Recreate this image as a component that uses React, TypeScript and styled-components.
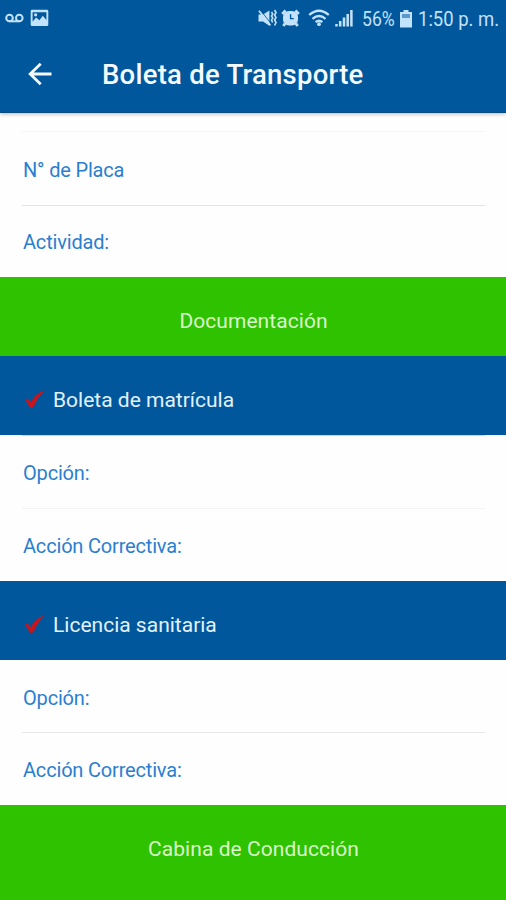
import React from "react";
import styled, { createGlobalStyle } from "styled-components";

const GlobalStyle = createGlobalStyle`
  html, body { margin: 0; padding: 0; background: #fefefe; }
  body { font-family: Roboto, "Liberation Sans", sans-serif; }
`;

const Screen = styled.div`
  width: 506px;
  height: 900px;
  overflow: hidden;
  background: #fefefe;
  display: flex;
  flex-direction: column;
`;

const Header = styled.header`
  flex: none;
  height: 113px;
  box-sizing: border-box;
  background: #01579b;
  border-bottom: 1px solid #0a4a88;
  box-shadow: 0 1px 4px rgba(0, 0, 0, 0.28);
`;

const StatusBar = styled.div`
  height: 37px;
  display: flex;
  align-items: center;
  color: #c3e2fb;
  padding-left: 5px;
`;

const StatusIcon = styled.svg<{ $gap?: number }>`
  flex: none;
  display: block;
  margin-left: ${(p) => p.$gap ?? 0}px;
`;

const Spacer = styled.div`
  flex: 1;
`;

const StatusText = styled.div<{ $width: number; $scale: number; $gap: number }>`
  flex: none;
  width: ${(p) => p.$width}px;
  margin-left: ${(p) => p.$gap}px;
  font-size: 21px;
  line-height: 38px;
  white-space: nowrap;
  transform: scaleX(${(p) => p.$scale});
  transform-origin: left center;
`;

const AppBar = styled.div`
  height: 75px;
  display: flex;
  align-items: center;
  color: #f4faff;
`;

const BackIcon = styled.svg`
  flex: none;
  margin: -2px 0 0 28px;
  display: block;
`;

const Title = styled.h1`
  margin: 0 0 0 50px;
  font-size: 27.5px;
  font-weight: 500;
  line-height: 36px;
  letter-spacing: 0.25px;
  white-space: nowrap;
`;

const Gap = styled.div`
  height: 18px;
`;

const Fields = styled.div`
  flex: none;
  padding: 0 21px 0 22px;
`;

const Field = styled.div<{ $height: number; $line?: string; $leading?: number }>`
  height: ${(p) => p.$height}px;
  box-sizing: border-box;
  border-top: 1px solid ${(p) => p.$line ?? "transparent"};
  padding-left: 1px;
  color: #2b7fd0;
  font-size: 20px;
  letter-spacing: -0.18px;
  line-height: ${(p) => p.$leading ?? 74}px;
  white-space: nowrap;
`;

const Section = styled.div<{ $height: number }>`
  flex: none;
  height: ${(p) => p.$height}px;
  padding-left: 1px;
  background: #2fc200;
  color: #d9f8c9;
  font-size: 21px;
  letter-spacing: 0.06px;
  line-height: 88px;
  text-align: center;
  white-space: nowrap;
`;

const ItemBar = styled.div`
  flex: none;
  height: 79px;
  display: flex;
  align-items: center;
  padding: 9px 0 0 24px;
  box-sizing: border-box;
  background: #01579b;
  color: #e1f2ff;
  font-size: 21px;
  gap: 8px;
  white-space: nowrap;
`;

const Check = () => (
  <svg width="21" height="22" viewBox="0 0 21 22">
    <path
      d="M.8 10.6C2.8 8.8 5.2 10 6.8 13.2C10 7.4 14 3.4 20.8 1.6C16 5.8 12.4 11.4 9.8 17.6C8.4 19.4 6.2 19.4 5.2 17.8C4 14.8 2.6 12.4 .8 10.6Z"
      fill="#c8141c"
    />
  </svg>
);

const App = () => (
  <Screen>
    <GlobalStyle />
    <Header>
      <StatusBar>
        <StatusIcon width="19" height="12" viewBox="0 0 19 12" fill="none" stroke="currentColor" strokeWidth="2">
          <circle cx="4.5" cy="5" r="3.3" />
          <circle cx="14.3" cy="5" r="3.3" />
          <path d="M4.5 8.3H14.3" />
        </StatusIcon>
        <StatusIcon $gap={6} width="19" height="20" viewBox="0 0 19 20">
          <path
            fill="currentColor"
            fillRule="evenodd"
            d="M2 .8H17Q18.3 .8 18.3 2V15.8Q18.3 17 17 17H2Q.7 17 .7 15.8V2Q.7 .8 2 .8ZM2.6 3.2V12.4L6.2 8.6L9.4 11.2L12.8 6.8L16.4 11V3.2Z"
          />
          <circle cx="5.6" cy="5.8" r="1.6" fill="currentColor" />
        </StatusIcon>
        <Spacer />
        <StatusIcon width="19" height="20" viewBox="0 0 19 20">
          <path d="M.5 5.6H5L11.4 1.6V16.8L5 12.6H.5Z" fill="currentColor" />
          <path d="M2.6 1.4L12.6 14" stroke="#01579b" strokeWidth="0.9" />
          <path d="M1 1.8L12.4 16.4" stroke="currentColor" strokeWidth="1.8" />
          <path
            d="M13.5 3L14.7 5L13.5 7L14.7 9L13.5 11L14.7 13.5M16.6 1L18 3.5L16.6 6L18 8.5L16.6 11L18 13.5L16.6 16.5"
            fill="none"
            stroke="currentColor"
            strokeWidth="1.6"
          />
        </StatusIcon>
        <StatusIcon $gap={4} width="19" height="19" viewBox="0 0 19 19">
          <rect x="2" y="2" width="15" height="14.6" rx="6" fill="currentColor" />
          <path d="M1.2 5L4.6 1.6M17.8 5L14.4 1.6M4 14.6L2.4 17M15 14.6L16.6 17" stroke="currentColor" strokeWidth="2.8" />
          <path d="M9.6 5.2V9.6H12.8" fill="none" stroke="#01579b" strokeWidth="1.4" />
        </StatusIcon>
        <StatusIcon $gap={8} width="22" height="20" viewBox="0 0 22 20">
          <g fill="none" stroke="currentColor" strokeWidth="2.3">
            <path d="M1.2 6Q11 -2.6 20.8 6" />
            <path d="M4.5 9.8Q11 4.2 17.5 9.8" />
            <path d="M7.6 13.2Q11 10.2 14.4 13.2" />
          </g>
          <circle cx="11" cy="15.2" r="1.9" fill="currentColor" />
        </StatusIcon>
        <StatusIcon $gap={5} width="18" height="20" viewBox="0 0 18 20">
          <path d="M1.5 17.5V15M5.2 17.5V12M9 17.5V8.5M12.7 17.5V5M16.4 17.5V1" stroke="currentColor" strokeWidth="2.5" />
        </StatusIcon>
        <StatusText $gap={9} $width={38} $scale={0.84}>56%</StatusText>
        <StatusIcon width="12" height="18" viewBox="0 0 12 18">
          <path d="M3.5 0H8.5V2H12V17.5H0V2H3.5Z" fill="currentColor" />
          <path d="M2 4H10V8H2Z" fill="#5c99c9" />
        </StatusIcon>
        <StatusText $gap={6} $width={88} $scale={0.88}>1:50 p. m.</StatusText>
      </StatusBar>
      <AppBar>
        <BackIcon width="24" height="24" viewBox="0 0 24 24" fill="none" stroke="currentColor" strokeWidth="2.8">
          <path d="M12.7 1.8L2.2 12L12.7 22.2M2.2 12H23.5" />
        </BackIcon>
        <Title>Boleta de Transporte</Title>
      </AppBar>
    </Header>
    <Gap />
    <Fields>
      <Field $height={74} $line="#f6f6f6" $leading={76}>N° de Placa</Field>
      <Field $height={72} $line="#e4e4e4" $leading={72}>Actividad:</Field>
    </Fields>
    <Section $height={79}>Documentación</Section>
    <ItemBar>
      <Check />
      Boleta de matrícula
    </ItemBar>
    <Fields>
      <Field $height={73} $line="#c4d6e6">Opción:</Field>
      <Field $height={73} $line="#f3f3f3">Acción Correctiva:</Field>
    </Fields>
    <ItemBar>
      <Check />
      Licencia sanitaria
    </ItemBar>
    <Fields>
      <Field $height={72}>Opción:</Field>
      <Field $height={73} $line="#e7e7e7">Acción Correctiva:</Field>
    </Fields>
    <Section $height={95}>Cabina de Conducción</Section>
  </Screen>
);

export default App;
